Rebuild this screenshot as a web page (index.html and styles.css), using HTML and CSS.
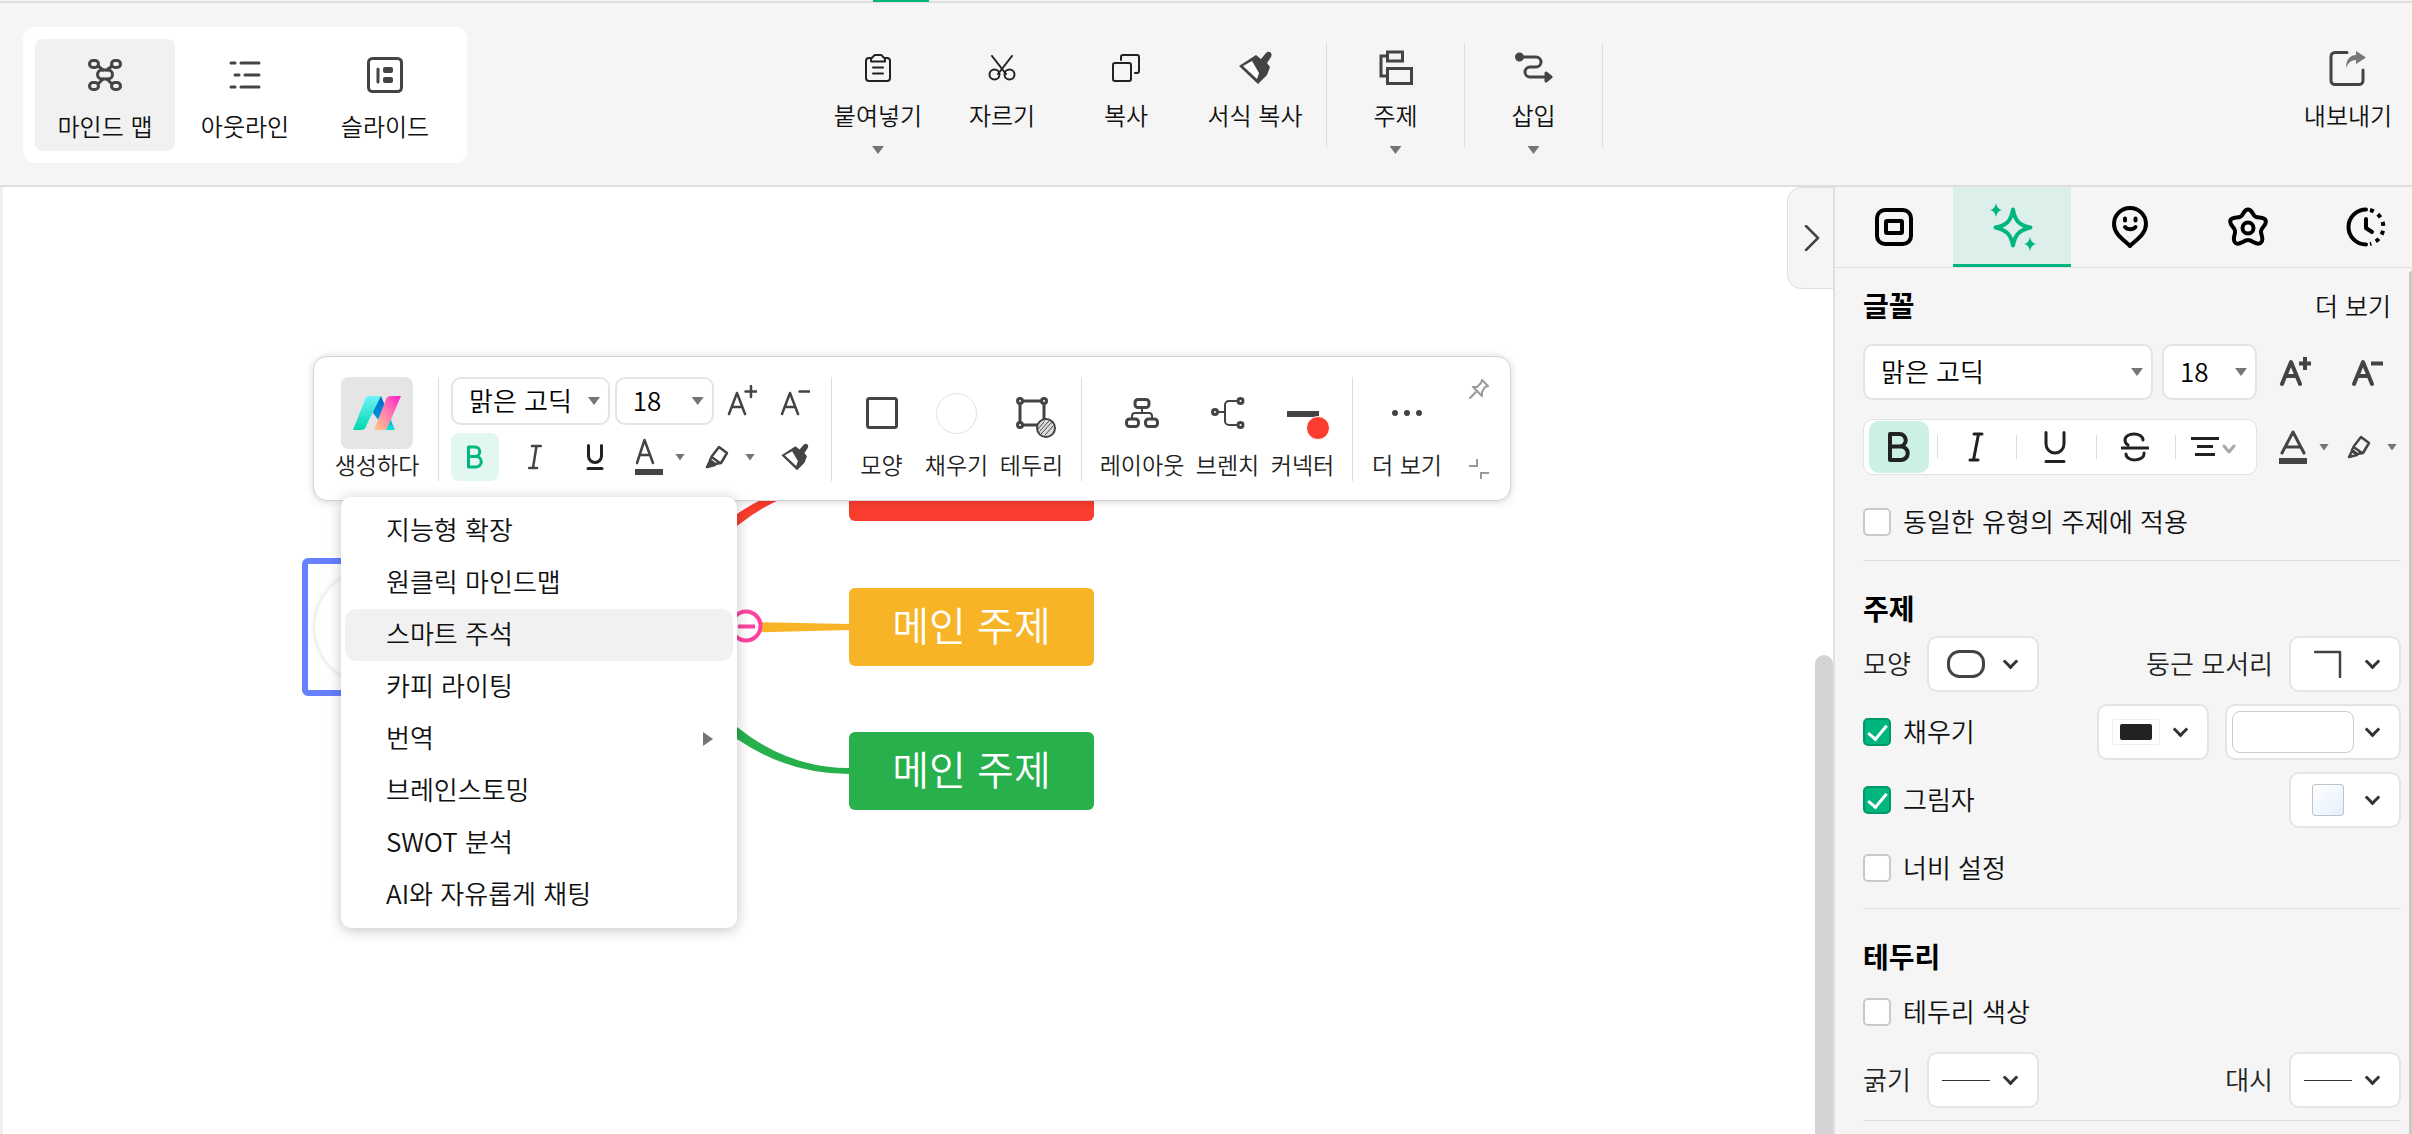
FILE: index.html
```html
<!DOCTYPE html>
<html lang="ko">
<head>
<meta charset="utf-8">
<title>마인드 맵</title>
<link rel="stylesheet" href="styles.css">
</head>
<body>
<div class="app">
  <div class="tabstrip"><span class="tabstrip-active"></span></div>

  <header class="ribbon">
    <nav class="views">
      <button class="view is-active" type="button">
        <span class="ico"><svg width="34" height="32" viewBox="0 0 34 32" class="line w3"><rect x="1.5" y="1.5" width="9" height="7" rx="3.5"/><rect x="23.5" y="1.5" width="9" height="7" rx="3.5"/><rect x="1.5" y="23.5" width="9" height="7" rx="3.5"/><rect x="23.5" y="23.5" width="9" height="7" rx="3.5"/><rect x="9.500" y="11" width="15" height="9" rx="4.500"/><path d="M10 7l5 4M24 7l-5 4M10 25l5-5M24 25l-5-5"/></svg></span>
        <span class="view-label">마인드 맵</span>
      </button>
      <button class="view" type="button">
        <span class="ico"><svg width="32" height="28" viewBox="0 0 32 28" class="line w3"><path d="M2 2h4M12 2h18M6 14h4M16 14h14M2 26h4M12 26h18"/></svg></span>
        <span class="view-label">아웃라인</span>
      </button>
      <button class="view" type="button">
        <span class="ico"><svg width="36" height="36" viewBox="0 0 36 36" class="line w3"><rect x="1.500" y="1.500" width="33" height="33" rx="4"/><path d="M11 12v13"/><rect class="solid" x="16" y="10" width="10" height="6" rx="2"/><rect class="solid" x="16" y="20" width="10" height="6" rx="2"/></svg></span>
        <span class="view-label">슬라이드</span>
      </button>
    </nav>

    <div class="tools">
      <button class="tool" type="button">
        <span class="ico"><svg width="26" height="28" viewBox="0 0 26 28" class="line w2 dark"><path d="M6 4H4a3 3 0 0 0-3 3v17a3 3 0 0 0 3 3h18a3 3 0 0 0 3-3V7a3 3 0 0 0-3-3h-2"/><path d="M6 7.500V4c3 0 2-3 4-3h6c2 0 1 3 4 3v3.500zM8 13.500h10M8 19.500h10"/></svg></span>
        <span class="tool-label">붙여넣기</span><span class="tri"></span>
      </button>
      <button class="tool" type="button">
        <span class="ico"><svg width="28" height="26" viewBox="0 0 28 26" class="line w2 dark"><path d="M4 1l14 18M24 1L10 19"/><circle cx="6.500" cy="19.500" r="5"/><circle cx="21.500" cy="19.500" r="5"/></svg></span>
        <span class="tool-label">자르기</span>
      </button>
      <button class="tool" type="button">
        <span class="ico"><svg width="28" height="28" viewBox="0 0 28 28" class="line w2 dark"><rect x="1" y="9" width="18" height="18" rx="2"/><path d="M9 6V3a2 2 0 0 1 2-2h14a2 2 0 0 1 2 2v14a2 2 0 0 1-2 2h-2"/></svg></span>
        <span class="tool-label">복사</span>
      </button>
      <button class="tool tool-wide" type="button">
        <span class="ico"><svg width="33" height="34" viewBox="0 0 33 34"><path class="fill" d="M17 4l5 4 5-6c3-3 7 0 5 4l-4 6 3 4-3 8-9 9L0 15z"/><path class="paper" d="M13 10l-9 5 14 13 2-6z"/></svg></span>
        <span class="tool-label">서식 복사</span>
      </button>
      <span class="tool-sep"></span>
      <button class="tool tool-menu" type="button">
        <span class="ico"><svg width="34" height="36" viewBox="0 0 34 36" class="line w3 sharp"><rect x="8.500" y="2" width="15" height="9"/><rect x="8.500" y="18.500" width="24" height="15"/><path d="M8 6H2v20h6"/></svg></span>
        <span class="tool-label">주제</span><span class="tri"></span>
      </button>
      <span class="tool-sep"></span>
      <button class="tool tool-menu" type="button">
        <span class="ico"><svg width="38" height="32" viewBox="0 0 38 32" class="line w3"><circle class="fill" cx="4.500" cy="5" r="3"/><path d="M5 5h16a5 5 0 0 1 0 10h-6a5 5 0 0 0 0 10h16"/><path class="fill" d="M31 21l5 4-5 4z"/></svg></span>
        <span class="tool-label">삽입</span><span class="tri"></span>
      </button>
      <span class="tool-sep"></span>
    </div>

    <div class="tools tools-end">
      <button class="tool tool-export" type="button">
        <span class="ico"><svg width="38" height="36" viewBox="0 0 38 36" class="line w3"><path d="M18 2.500H6a4 4 0 0 0-4 4v24a4 4 0 0 0 4 4h24a4 4 0 0 0 4-4V20"/><path class="gray" d="M27 1l10 6.500L27 14v-4c-5 0-8 3-10 8 0-8 4-13 10-13z"/></svg></span>
        <span class="tool-label">내보내기</span>
      </button>
    </div>
  </header>

  <div class="body">
    <main class="canvas">
      <svg class="links" width="1100" height="800" viewBox="0 187 1100 800">
        <path fill="#f93d2f" d="M700 553L737 526Q788 485 849 485V479Q788 479 737 514L700 541z"/>
        <path fill="#f8b427" d="M700 621L849 624V630L700 634z"/>
        <path fill="#27b04b" d="M700 700L737 727Q788 768 849 768V774Q788 774 737 739L700 712z"/>
        <circle cx="746" cy="626" r="14.500" fill="#fff" stroke="#ff42a1" stroke-width="4"/>
        <path d="M738 626.500h17" stroke="#ff42a1" stroke-width="4"/>
      </svg>
      <div class="root-selection"><div class="root-topic"></div></div>
      <div class="node node-red"></div>
      <div class="node node-yellow">메인 주제</div>
      <div class="node node-green">메인 주제</div>

      <div class="floatbar">
        <button class="fitem fitem-ai" type="button">
          <span class="ai-tile"><svg width="48" height="36" viewBox="0 0 48 36">
            <defs>
              <linearGradient id="ga" x1="0" y1="1" x2="0" y2="0"><stop offset="0" stop-color="#00d8b0"/><stop offset="1" stop-color="#6ff2f8"/></linearGradient>
              <linearGradient id="gb" x1="0" y1="0" x2="0" y2="1"><stop offset="0" stop-color="#0068c8"/><stop offset=".6" stop-color="#0090e0"/><stop offset="1" stop-color="#00f0d0"/></linearGradient>
              <linearGradient id="gc" x1="0" y1="1" x2="1" y2="0"><stop offset="0" stop-color="#ffcb80"/><stop offset=".5" stop-color="#ff7fae"/><stop offset="1" stop-color="#ff1fc8"/></linearGradient>
            </defs>
            <path fill="url(#gb)" d="M21 1h7l14 34h-9L20 18z"/>
            <path fill="url(#ga)" d="M28 1H16c-3 0-4 3-5 6L0 35h8c4 0 5-3 6-6z"/>
            <path fill="url(#gc)" d="M48 1H38c-4 0-5 3-6 6L21 35h9c4 0 5-3 6-6z"/>
          </svg></span>
          <span class="flabel">생성하다</span>
        </button>
        <span class="fsep"></span>
        <div class="fonts">
          <div class="fonts-row">
            <span class="pick pick-font"><select aria-label="글꼴"><option>맑은 고딕</option></select></span>
            <span class="pick pick-size"><select aria-label="글꼴 크기"><option>18</option></select></span>
            <button class="sq" type="button" aria-label="글꼴 크게"><svg width="30" height="32" viewBox="0 0 30 32" class="line w2h"><path d="M2 29L10 8l8 21M5 22h10M24 1v11M18.500 6.500h11"/></svg></button>
            <button class="sq" type="button" aria-label="글꼴 작게"><svg width="30" height="32" viewBox="0 0 30 32" class="line w2h"><path d="M2 29L10 8l8 21M5 22h10M19.500 6.500h10"/></svg></button>
          </div>
          <div class="fonts-row">
            <button class="sq is-on" type="button" aria-label="굵게"><svg width="18" height="24" viewBox="0 0 18 24" class="line w3"><path d="M2.500 2v20H10a5 5 0 0 0 0-10.500H2.500M2.500 2H9a4.700 4.700 0 0 1 0 9.500"/></svg></button>
            <button class="sq" type="button" aria-label="기울임"><svg width="14" height="26" viewBox="0 0 14 26" class="line w2h"><path d="M4 2h9M1 24h8M8.500 2L5 24"/></svg></button>
            <button class="sq" type="button" aria-label="밑줄"><svg width="18" height="26" viewBox="0 0 18 26" class="line w3 dark"><path d="M2.500 1.500V12a6.500 6.500 0 0 0 13 0V1.500M2 24.500h14"/></svg></button>
            <button class="duo" type="button" aria-label="글자 색"><svg width="28" height="40" viewBox="0 0 28 40" class="line w2h"><path d="M2 26L9.500 3 18 26M5 18h10"/><rect class="solid" x="0" y="32" width="28" height="6"/></svg><span class="tri tri-s"></span></button>
            <button class="duo" type="button" aria-label="형광펜"><svg width="24" height="24" viewBox="0 0 24 24" class="line w2h"><path d="M7 11l7-9 8 6-6 10-6 1-5-4zM8 13l7 5"/><path class="fill" d="M5 16l5 4-8 2z"/></svg><span class="tri tri-s"></span></button>
            <button class="sq" type="button" aria-label="서식 복사"><svg width="28" height="28" viewBox="0 0 33 34"><path class="fill" d="M17 4l5 4 5-6c3-3 7 0 5 4l-4 6 3 4-3 8-9 9L0 15z"/><path class="paper" d="M13 10l-9 5 14 13 2-6z"/></svg></button>
          </div>
        </div>
        <span class="fsep"></span>
        <button class="fitem" type="button">
          <span class="fico"><svg width="32" height="32" viewBox="0 0 32 32" class="line w3"><rect x="1.500" y="1.500" width="29" height="29" rx="2"/></svg></span>
          <span class="flabel">모양</span>
        </button>
        <button class="fitem" type="button">
          <span class="fico"><span class="swatch-round"></span></span>
          <span class="flabel">채우기</span>
        </button>
        <button class="fitem" type="button">
          <span class="fico"><svg width="60" height="60" viewBox="-13 -13 60 60" class="line w3"><path d="M5 5h24v24H5z"/><g class="paper-dot"><circle cx="5" cy="5" r="2.500"/><circle cx="29" cy="5" r="2.500"/><circle cx="5" cy="29" r="2.500"/></g><circle cx="31" cy="32" r="9" fill="#ddd" stroke-width="2"/><path stroke-width="1" d="M25 35l9-10M26 38l11-12M30 39l8-9M23 33l6-7"/></svg></span>
          <span class="flabel">테두리</span>
        </button>
        <span class="fsep"></span>
        <button class="fitem fitem-layout" type="button">
          <span class="fico"><svg width="34" height="30" viewBox="0 0 34 30" class="line w3"><rect x="10" y="1.500" width="14" height="8" rx="3"/><rect x="1.500" y="21" width="12" height="7.500" rx="3"/><rect x="20.500" y="21" width="12" height="7.500" rx="3"/><path stroke-width="2" d="M17 10v5M7 21v-3a3 3 0 0 1 3-3h14a3 3 0 0 1 3 3v3"/></svg></span>
          <span class="flabel">레이아웃</span>
        </button>
        <button class="fitem" type="button">
          <span class="fico"><svg width="34" height="34" viewBox="0 0 34 34" class="line w3"><path stroke-width="2" d="M7 16h7M27 5h-9a4 4 0 0 0-4 4v16a4 4 0 0 0 4 4h9"/><circle cx="4" cy="16" r="2.500"/><circle cx="29.500" cy="5" r="2.500"/><circle cx="29.500" cy="29" r="2.500"/></svg></span>
          <span class="flabel">브렌치</span>
        </button>
        <button class="fitem" type="button">
          <span class="fico"><svg width="54" height="56" viewBox="-11 0 54 56"><path class="fill" d="M0 26h32v6H0z"/><circle cx="31" cy="43" r="11.500" fill="#f93d2f" stroke="#fff"/></svg></span>
          <span class="flabel">커넥터</span>
        </button>
        <span class="fsep"></span>
        <button class="fitem fitem-more" type="button">
          <span class="fico"><svg width="32" height="8" viewBox="0 0 32 8" class="fill"><circle cx="4" cy="4" r="3"/><circle cx="16" cy="4" r="3"/><circle cx="28" cy="4" r="3"/></svg></span>
          <span class="flabel">더 보기</span>
        </button>
        <div class="fside">
          <button class="mini" type="button" aria-label="고정"><svg width="20" height="20" viewBox="0 0 20 20" class="line w2 pale"><path d="M13 1l6 6-3 1-3 5 0 4-9-9 4 0 4-4zM1 19l6-6"/></svg></button>
          <button class="mini" type="button" aria-label="접기"><svg width="20" height="20" viewBox="0 0 20 20" class="line w2 pale sharp"><path d="M8 0v7H0M12 20v-6h8"/></svg></button>
        </div>
      </div>

      <div class="menu" role="menu">
        <button class="menu-item" role="menuitem" type="button">지능형 확장</button>
        <button class="menu-item" role="menuitem" type="button">원클릭 마인드맵</button>
        <button class="menu-item is-hover" role="menuitem" type="button">스마트 주석</button>
        <button class="menu-item" role="menuitem" type="button">카피 라이팅</button>
        <button class="menu-item has-sub" role="menuitem" type="button">번역</button>
        <button class="menu-item" role="menuitem" type="button">브레인스토밍</button>
        <button class="menu-item" role="menuitem" type="button">SWOT 분석</button>
        <button class="menu-item" role="menuitem" type="button">AI와 자유롭게 채팅</button>
      </div>

      <button class="collapse" type="button" aria-label="패널 접기"><svg width="16" height="26" viewBox="0 0 16 26" class="line w2h"><path d="M2 1l12 12L2 25"/></svg></button>
      <span class="canvas-scroll"></span>
    </main>

    <aside class="panel">
      <nav class="ptabs">
        <button class="ptab" type="button" aria-label="모양"><svg width="38" height="38" viewBox="0 0 38 38" class="line"><rect x="2" y="2" width="34" height="34" rx="8"/><rect x="11" y="13" width="16" height="12" rx="1"/></svg></button>
        <button class="ptab is-active" type="button" aria-label="스타일"><svg width="48" height="48" viewBox="0 0 48 48" class="line"><path d="M25 6.500c2 11 6 16 17.500 18C31 27 27 32 25 42.500 23 32 19 27 7.500 24.500 19 22.500 23 17.500 25 6.500z"/><path class="spark" d="M8 0q1 6 6 7-5 1-6 7-1-6-6-7 5-1 6-7zM42 34q1 6 6 7-5 1-6 7-1-6-6-7 5-1 6-7z"/></svg></button>
        <button class="ptab" type="button" aria-label="스티커"><svg width="38" height="42" viewBox="0 0 38 42" class="line"><path d="M19 40C13 34 3 28 3 18a16 16 0 0 1 32 0c0 10-10 16-16 22z"/><path d="M14 12.500v2M24.500 12.500v2M14 21c2.500 3 8 3 10.500 0"/></svg></button>
        <button class="ptab" type="button" aria-label="도형"><svg width="40" height="40" viewBox="0 0 40 40" class="line"><path d="M20 2.500c5 0 4 6 8 7.500 3 1 8 0 9.500 3 2 5-4 7-4.500 11-.500 4 4 9-.500 12-4 3-8-3-12.500-3s-8.500 6-12.500 3c-4-3 0-8-.500-12C7 20 .500 18 2.500 13c1.500-3 6.500-2 9.500-3 4-1.500 3-7.500 8-7.500z"/><circle cx="20" cy="21" r="5.500"/></svg></button>
        <button class="ptab" type="button" aria-label="기록"><svg width="40" height="40" viewBox="0 0 40 40" class="line"><path d="M20 2.500a17.500 17.500 0 0 0 0 35M20 12v9l6 4"/><path stroke-linecap="butt" stroke-dasharray="4 5" d="M24 3a17.500 17.500 0 0 1 0 34"/></svg></button>
      </nav>

      <section class="psec psec-font">
        <div class="phead"><h2>글꼴</h2><a class="more" href="#">더 보기</a></div>
        <div class="prow prow-font">
          <span class="pick pick-wide"><select aria-label="글꼴"><option>맑은 고딕</option></select></span>
          <span class="pick pick-size"><select aria-label="글꼴 크기"><option>18</option></select></span>
          <span class="pair pair-size">
            <button class="sq" type="button" aria-label="글꼴 크게"><svg width="34" height="30" viewBox="0 0 34 30" class="line w4"><path d="M3 27L12 5l9 22M7 19h10"/><path class="flat" d="M26 0v13M20 6.500h12"/></svg></button>
            <button class="sq" type="button" aria-label="글꼴 작게"><svg width="34" height="30" viewBox="0 0 34 30" class="line w4"><path d="M3 27L12 5l9 22M7 19h10"/><path class="flat" d="M20 6.500h12"/></svg></button>
          </span>
        </div>
        <div class="prow prow-font">
          <div class="seg">
            <button class="seg-btn is-on" type="button" aria-label="굵게"><svg width="24" height="30" viewBox="0 0 24 30" class="line w4 dark"><path d="M3 2v26h11a6.500 6.500 0 0 0 0-13.500H3M3 2h9.500a6 6 0 0 1 0 12.500"/></svg></button>
            <button class="seg-btn" type="button" aria-label="기울임"><svg width="16" height="30" viewBox="0 0 16 30" class="line w3 dark"><path d="M6 2h8M2 28h8M10.500 2L5.500 28"/></svg></button>
            <button class="seg-btn" type="button" aria-label="밑줄"><svg width="22" height="32" viewBox="0 0 22 32" class="line w3 dark"><path d="M2 1.500V13a9 9 0 0 0 18 0V1.500M2 30.500h18"/></svg></button>
            <button class="seg-btn" type="button" aria-label="취소선"><svg width="28" height="30" viewBox="0 0 28 30" class="line w3 dark"><path d="M22 8c0-8-18-8-18 0 0 3 1 4 3 5M1 16h26M5 22c0 8 19 8 18-1"/></svg></button>
            <button class="seg-btn" type="button" aria-label="정렬"><svg width="46" height="24" viewBox="0 0 46 24" class="line w3 dark"><path class="flat" d="M0 3.500h28M6 11.500h16M4 19.500h20"/><path class="pale-line" d="M33 11l5 6 5-6"/></svg></button>
          </div>
          <span class="pair">
            <button class="duo" type="button" aria-label="글자 색"><svg width="28" height="34" viewBox="0 0 28 34" class="line w3"><path d="M3 23L14 2l11 21M7 17h14"/><rect class="solid" x="0" y="28" width="28" height="6"/></svg><span class="tri tri-s"></span></button>
            <button class="duo" type="button" aria-label="형광펜"><svg width="24" height="24" viewBox="0 0 24 24" class="line w2h"><path d="M7 11l7-9 8 6-6 10-6 1-5-4zM8 13l7 5"/><path d="M5 16l5 4-8 2z"/></svg><span class="tri tri-s"></span></button>
          </span>
        </div>
        <label class="prow check"><input type="checkbox"><span>동일한 유형의 주제에 적용</span></label>
      </section>

      <section class="psec">
        <div class="phead"><h2>주제</h2></div>
        <div class="prow">
          <span class="plabel">모양</span>
          <button class="drop" type="button" aria-label="모양"><svg width="38" height="28" viewBox="0 0 38 28" class="line w3"><rect x="1.500" y="1.500" width="35" height="25" rx="11"/></svg><span class="chev"></span></button>
          <span class="plabel push">둥근 모서리</span>
          <button class="drop" type="button" aria-label="둥근 모서리"><svg width="28" height="28" viewBox="0 0 28 28" class="line w2h"><path d="M1 2h25v25"/></svg><span class="chev"></span></button>
        </div>
        <div class="prow">
          <label class="check"><input type="checkbox" checked><span>채우기</span></label>
          <button class="drop push" type="button" aria-label="채우기 유형"><span class="sw-frame"><span class="sw-solid"></span></span><span class="chev"></span></button>
          <button class="drop drop-wide" type="button" aria-label="채우기 색"><span class="sw-color"></span><span class="chev"></span></button>
        </div>
        <div class="prow">
          <label class="check"><input type="checkbox" checked><span>그림자</span></label>
          <button class="drop push" type="button" aria-label="그림자 유형"><span class="sw-shadow"></span><span class="chev"></span></button>
        </div>
        <label class="prow check"><input type="checkbox"><span>너비 설정</span></label>
      </section>

      <section class="psec">
        <div class="phead"><h2>테두리</h2></div>
        <label class="prow check"><input type="checkbox"><span>테두리 색상</span></label>
        <div class="prow">
          <span class="plabel">굵기</span>
          <button class="drop" type="button" aria-label="굵기"><span class="sw-line"></span><span class="chev"></span></button>
          <span class="plabel push">대시</span>
          <button class="drop" type="button" aria-label="대시"><span class="sw-line"></span><span class="chev"></span></button>
        </div>
      </section>
      <span class="panel-scroll"></span>
    </aside>
  </div>
</div>
</body>
</html>
```
FILE: styles.css
```css
* { box-sizing: border-box; }

body {
  margin: 0;
  font-family: "Noto Sans CJK KR", sans-serif;
  font-size: 26px;
  font-weight: 350;
  color: #111;
  background: #f5f5f5;
}

button, select {
  margin: 0;
  padding: 0;
  border: 0;
  background: none;
  font: inherit;
  color: inherit;
}

svg { display: block; flex: none; }

.app {
  display: flex;
  flex-direction: column;
  height: 100vh;
  overflow: hidden;
}

/* Icon strokes */
.line { fill: none; stroke: #444; stroke-width: 4; stroke-linecap: round; stroke-linejoin: round; }
.line.w2 { stroke-width: 2; }
.line.w2h { stroke-width: 2.5; }
.line.w3 { stroke-width: 3; }
.line.w4 { stroke-width: 4; }
.line.dark { stroke: #222; }
.line.pale { stroke: #999; }
.line.sharp { stroke-linecap: butt; stroke-linejoin: miter; }
.line .flat { stroke-linecap: butt; }
.line .pale-line { stroke: #aaa; }
.fill { fill: #444; }
.solid { fill: #444; stroke: none; }
.gray { fill: #777; stroke: none; }
.paper { fill: #fff; }
.paper-dot { fill: #fff; }

.tri {
  width: 12px;
  height: 8px;
  background: #757575;
  clip-path: polygon(0 0, 100% 0, 50% 100%);
}

/* Top ribbon */
.tabstrip {
  flex: none;
  height: 3px;
  padding-left: 36.2%;
  border-bottom: 2px solid #dfdfdf;
}
.tabstrip-active {
  display: block;
  width: 56px;
  height: 2px;
  background: #00b67f;
}

.ribbon {
  flex: none;
  display: grid;
  grid-template-columns: 1fr auto 1fr;
  align-items: start;
  padding: 24px 16px 22px 23px;
  border-bottom: 2px solid #dfdfdf;
}

.views {
  display: flex;
  justify-self: start;
  padding: 12px;
  border-radius: 12px;
  background: #fff;
}
.view {
  display: flex;
  flex-direction: column;
  align-items: center;
  gap: 18px;
  width: 140px;
  height: 112px;
  padding-top: 18px;
  border-radius: 8px;
}
.view.is-active { background: #f1f1f1; }

.ico {
  display: flex;
  align-items: center;
  justify-content: center;
  height: 36px;
}
.view-label, .tool-label {
  font-size: 24px;
  line-height: 30px;
  white-space: nowrap;
}

.tools { display: flex; margin-top: 16px; height: 112px; }
.tools-end { justify-self: end; }
.tool {
  display: flex;
  flex-direction: column;
  align-items: center;
  width: 124px;
  padding-top: 7px;
}
.tool-label { margin: 14px 0 16px; }
.tool-wide { width: 138px; padding-right: 4px; }
.tool-menu { width: 137px; }
.tool-export { width: 96px; }
.tool-sep { width: 1px; height: 104px; background: #dcdcdc; }

/* Work area */
.body { flex: 1; display: flex; min-height: 0; }

.canvas {
  position: relative;
  flex: 1;
  min-width: 0;
  overflow: hidden;
  border-left: 3px solid #efefef;
  background: #fff;
}
.links { position: absolute; left: -3px; top: 0; }

.root-selection {
  position: absolute;
  left: 299px;
  top: 371px;
  width: 420px;
  height: 138px;
  padding: 6px;
  border: 6px solid #6680ff;
  border-radius: 6px;
  background: #fff;
}
.root-topic {
  height: 114px;
  border: 1px solid #eaeaea;
  border-radius: 57px;
  box-shadow: 0 0 4px #ddd;
}

.node {
  position: absolute;
  left: 846px;
  width: 245px;
  height: 78px;
  border-radius: 6px;
  color: #fff;
  font-size: 40px;
  line-height: 72px;
  text-align: center;
}
.node-red { top: 256px; background: #f93d2f; }
.node-yellow { top: 401px; background: #f8b427; }
.node-green { top: 545px; background: #27b04b; }

/* Floating toolbar over the selected topic */
.floatbar {
  position: absolute;
  left: 310px;
  top: 169px;
  display: flex;
  height: 145px;
  padding: 20px 21px 0 19px;
  border: 1px solid #d4d4d4;
  border-radius: 14px;
  background: #fff;
  box-shadow: 0 1px 8px rgba(0, 0, 0, .16);
}
.fsep { width: 1px; height: 104px; margin: 0 12px; background: #dcdcdc; }
.fitem {
  display: flex;
  flex-direction: column;
  align-items: center;
  width: 75px;
  height: 104px;
  color: #222;
}
.fitem-ai { width: 88px; margin-right: 5px; }
.fitem-layout { width: 96px; }
.fitem-more { width: 84px; }
.ai-tile, .fico {
  display: flex;
  align-items: center;
  justify-content: center;
  width: 72px;
  height: 72px;
  border-radius: 8px;
}
.ai-tile { background: #e5e5e5; }
.flabel { font-size: 23px; line-height: 30px; white-space: nowrap; }
.swatch-round {
  width: 41px;
  height: 41px;
  border: 1px solid #e2e2e2;
  border-radius: 50%;
}

.fonts { display: flex; flex-direction: column; gap: 8px; width: 368px; }
.fonts-row { display: flex; justify-content: space-between; }
.sq {
  display: flex;
  align-items: center;
  justify-content: center;
  width: 48px;
  height: 48px;
  border-radius: 8px;
}
.sq.is-on { background: #e3f7f1; }
.sq.is-on .line { stroke: #00b67f; }
.duo {
  display: flex;
  align-items: center;
  justify-content: space-between;
  width: 58px;
  height: 48px;
  padding: 0 4px;
}
.tri-s { width: 10px; height: 7px; }

.pick { position: relative; display: block; height: 48px; }
.pick select {
  appearance: none;
  width: 100%;
  height: 100%;
  padding: 0 0 4px 16px;
  border: 2px solid #e4e4e4;
  border-radius: 10px;
  background: #fff;
  color: #000;
}
.pick::after {
  content: "";
  position: absolute;
  right: 10px;
  top: 50%;
  width: 12px;
  height: 8px;
  margin-top: -4px;
  background: #757575;
  clip-path: polygon(0 0, 100% 0, 50% 100%);
}
.pick-font { width: 159px; }
.pick-size { width: 99px; }

.fside {
  display: flex;
  flex-direction: column;
  justify-content: space-between;
  height: 104px;
  margin-left: 20px;
  padding: 2px 0;
}

/* AI menu */
.menu {
  position: absolute;
  left: 338px;
  top: 310px;
  width: 396px;
  padding: 8px 4px 7px;
  border-radius: 10px;
  background: #fff;
  box-shadow: 0 2px 14px rgba(0, 0, 0, .24);
}
.menu-item {
  position: relative;
  display: block;
  width: 100%;
  height: 52px;
  padding: 0 0 6px 41px;
  border-radius: 12px;
  text-align: left;
}
.menu-item.is-hover { background: #f1f1f1; }
.has-sub::after {
  content: "";
  position: absolute;
  right: 20px;
  top: 19px;
  width: 10px;
  height: 14px;
  background: #757575;
  clip-path: polygon(0 0, 100% 50%, 0 100%);
}

.collapse {
  position: absolute;
  right: -1px;
  top: 0;
  display: flex;
  align-items: center;
  justify-content: center;
  width: 47px;
  height: 102px;
  padding-left: 2px;
  border: 1px solid #dfdfe2;
  border-radius: 14px 0 0 14px;
  background: #f5f5f5;
}
.canvas-scroll {
  position: absolute;
  right: 0;
  top: 468px;
  bottom: 0;
  width: 18px;
  border-radius: 9px 9px 0 0;
  background: #d3d3d5;
}

/* Format panel */
.panel {
  position: relative;
  flex: none;
  width: 579px;
  overflow: hidden;
  border-left: 2px solid #dfdfe6;
  background: #f5f5f5;
}
.panel-scroll {
  position: absolute;
  right: 0;
  top: 84px;
  bottom: 0;
  width: 3px;
  border-radius: 3px 0 0 0;
  background: #c8c8c8;
}
.ptabs {
  display: flex;
  height: 81px;
  border-bottom: 1px solid #dfdfdf;
}
.ptab {
  flex: none;
  display: flex;
  align-items: center;
  justify-content: center;
  width: 118px;
  height: 80px;
  padding-top: 2px;
  border-bottom: 3px solid transparent;
}
.ptab .line { stroke: #000; }
.ptab.is-active { border-bottom-color: #00b67f; background: #dcefea; }
.ptab.is-active .line { stroke: #00b67f; }
.ptab.is-active .spark { fill: #00b67f; stroke: none; }

.psec {
  display: flex;
  flex-direction: column;
  gap: 12px;
  margin: 0 11px 0 28px;
  padding: 27px 0 12px;
  border-bottom: 1px solid #dfdfdf;
}
.psec-font { gap: 19px; padding: 17px 0 10px; }
.phead {
  display: flex;
  justify-content: space-between;
  align-items: center;
  height: 40px;
  padding-right: 10px;
}
.psec:not(.psec-font) .phead { margin-bottom: -4px; }
.phead h2 { margin: 0; font-size: 28px; line-height: 40px; font-weight: 700; color: #000; }
.more { color: inherit; text-decoration: none; font-size: 25px; line-height: 36px; }

.prow { display: flex; align-items: center; gap: 16px; height: 56px; }
.prow-font { gap: 9px; }
.prow-font .pick { height: 56px; }
.pick-wide { flex: 1; }
.prow-font .pick-size { width: 95px; }
.pair { display: flex; gap: 10px; width: 135px; justify-content: flex-end; }
.pair-size { gap: 12px; justify-content: flex-start; }
.pair-size .sq { width: 60px; }
.plabel { color: #222; white-space: nowrap; }
.push { margin-left: auto; }
.plabel, .check span { padding-bottom: 3px; }

.seg {
  flex: 1;
  display: flex;
  align-items: center;
  height: 56px;
  padding: 0 2px;
  border: 1px solid #e2e2e2;
  border-radius: 10px;
  background: #fff;
}
.seg-btn {
  position: relative;
  flex: 1;
  display: flex;
  align-items: center;
  justify-content: center;
  height: 52px;
  margin: 0 3px 0 2px;
  border-radius: 10px;
}
.seg-btn.is-on { flex: none; width: 60px; margin: 0 8px 0 3px; background: #cdf0e5; }
.seg-btn + .seg-btn::before {
  content: "";
  position: absolute;
  left: -2px;
  top: 14px;
  width: 1px;
  height: 24px;
  background: #ddd;
}

.check { display: flex; align-items: center; gap: 12px; }
.check input {
  appearance: none;
  display: grid;
  place-items: center;
  width: 28px;
  height: 28px;
  margin: 0;
  border: 2px solid #c9c9c9;
  border-radius: 5px;
  background: #fff;
}
.check input:checked { border-color: #009a6a; background: #00b67f; }
.check input:checked::after {
  content: "";
  width: 16px;
  height: 8px;
  margin: -4px 0 0 1px;
  border-left: 3px solid #fff;
  border-bottom: 3px solid #fff;
  transform: rotate(-50deg);
}

.drop {
  display: flex;
  align-items: center;
  width: 112px;
  height: 56px;
  padding: 0 21px 0 10px;
  border: 2px solid #e4e4e4;
  border-radius: 10px;
  background: #fff;
}
.drop > :first-child { margin: 0 auto; }
.chev {
  width: 11px;
  height: 11px;
  margin: -6px 0 0 12px;
  border-right: 3px solid #333;
  border-bottom: 3px solid #333;
  transform: rotate(45deg);
}
.drop-wide { width: 176px; padding-left: 3px; }
.sw-frame {
  display: grid;
  place-items: center;
  width: 48px;
  height: 26px;
  border: 1px solid #eee;
  border-radius: 2px;
}
.sw-solid { width: 32px; height: 16px; border-radius: 2px; background: #222; }
.sw-color { width: 122px; height: 42px; border: 1px solid #ccc; border-radius: 8px; }
.sw-shadow {
  width: 32px;
  height: 32px;
  border: 1px solid #bcc3cd;
  border-radius: 3px;
  background: linear-gradient(135deg, #fff, #e3effc);
}
.sw-line { width: 48px; height: 1px; background: #333; }
```
